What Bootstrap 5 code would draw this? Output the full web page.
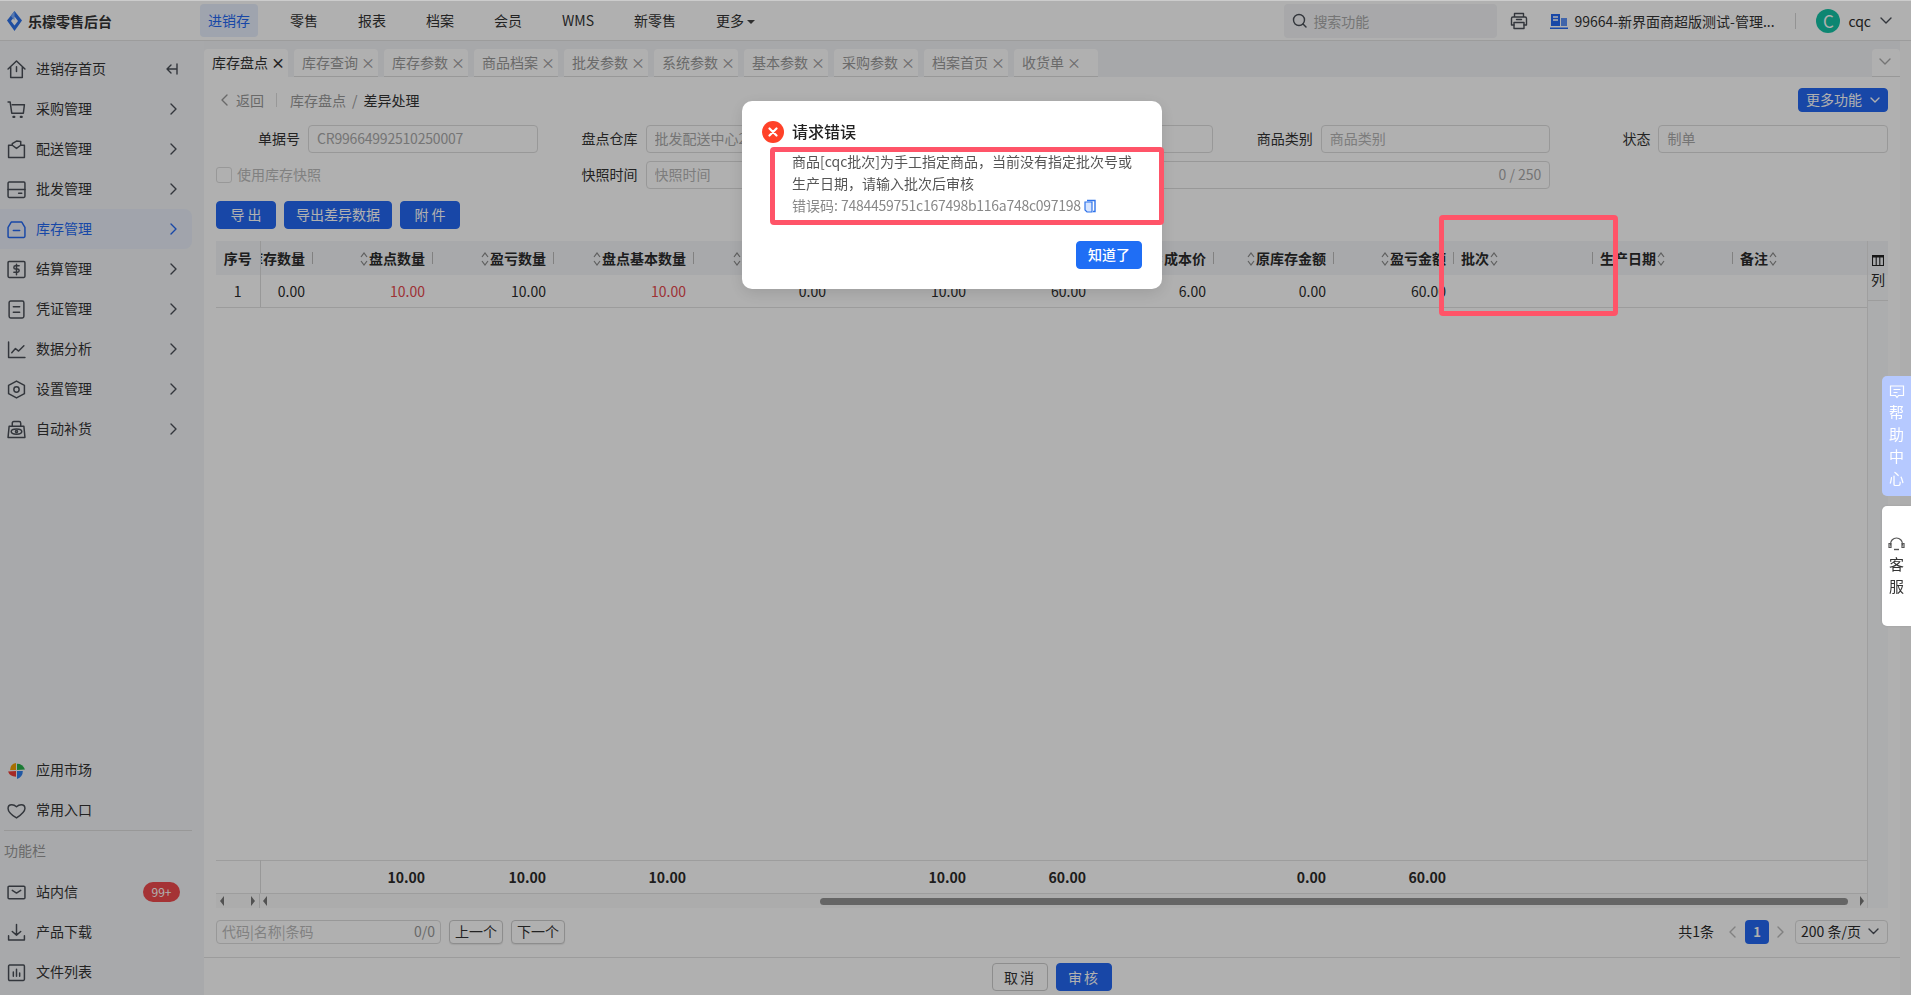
<!DOCTYPE html>
<html lang="zh-CN">
<head>
<meta charset="utf-8">
<title>乐檬零售后台</title>
<link href="https://cdn.jsdelivr.net/npm/bootstrap@5.3.0/dist/css/bootstrap.min.css" rel="stylesheet">
<style>
html,body{height:100%;overflow:hidden}
body{font-family:"Noto Sans CJK SC","Noto Sans",sans-serif;font-size:14px;color:#2b2b2b;background:#fff;line-height:20px}
.ico{fill:none;stroke:#4a4f57;stroke-width:1.4;stroke-linecap:round;stroke-linejoin:round;flex:none}
.shell{height:100vh}
.topbar{height:41px;border-top:1px solid #ccc;border-bottom:1px solid #e2e2e2;flex:none}
.brand{width:200px;padding-left:7px;gap:6px;font-weight:700;color:#333}
.topnav{gap:24px}
.topnav .nav-link{padding:0 8px;height:33px;line-height:33px;color:#333;border-radius:4px;font-size:14px}
.topnav .nav-link.on{background:#e6eefc;color:#2468f2}
.caret{display:inline-block;border:4px solid transparent;border-top-color:#444;border-bottom:0;margin-left:3px;vertical-align:2px}
.searchbox{width:213px;height:34px;background:#f3f4f6;border-radius:4px;padding-left:8px;gap:6px;color:#aaa;margin-right:13px}
.orgname{margin-left:22px;gap:6px;width:245px;white-space:nowrap;color:#333}
.vsep{width:1px;height:16px;background:#d5d5d5}
.avatar{width:24px;height:24px;border-radius:50%;background:#14c3a5;color:#fff;font-size:17px;margin-left:20px;margin-right:8px;padding-top:1px}
.sidebar{width:204px;background:#f3f5f8;padding:8px 0 3px;flex:none}
.sideitem{height:40px;width:192px;padding-left:7px;gap:10px;color:#333;border-radius:0 8px 8px 0;position:relative}
.sideitem>svg:first-child{width:19px;height:19px}
.sideitem>span:not(.badge){margin-top:-2px}
.sideitem .chev{position:absolute;left:170px}
.sideitem .chev.back{left:166px}
.sideitem.on{background:#e9eef9;color:#2468f2}
.sideitem.on .ico{stroke:#2468f2}
.sidehr{height:1px;background:#ddd;margin:0 12px 0 4px;width:188px}
.sidecap{height:41px;line-height:39px;padding-left:4px;color:#999}
.sidebadge{position:absolute;left:143px;width:37px;height:20px;border-radius:10px;background:#f04b4d;color:#fff;font-size:12px;font-weight:400;line-height:20px;padding:0;text-align:center}
.mainwrap{min-width:0}
.tabstrip{height:36px;background:#f2f4f6;padding-top:8px;gap:6px;flex:none}
.pagetab{width:84px;height:28px;background:#fff;border-bottom:1px solid #ddd;border-radius:4px 4px 0 0;padding:0 0 2px 8px;color:#9a9a9a;gap:3px;white-space:nowrap}
.pagetab.on{color:#333;border-bottom-color:#fff}
.pagetab .x{font-size:14px;line-height:20px}
.pagetab.on .x{font-weight:700}
.pagetab.last{width:28px;margin-left:auto;padding-left:7px}
.body-pad{padding:0 12px;min-height:0}
.crumbrow{height:48px;flex:none;padding-bottom:2px}
.crumbs.breadcrumb{margin:0;--bs-breadcrumb-divider-color:#999;--bs-breadcrumb-item-padding-x:6px;font-size:14px}
.crumbs .breadcrumb-item{color:#999}
.crumbs .breadcrumb-item.active{color:#333}
.crumbs .breadcrumb-item+.breadcrumb-item{padding-left:6px}
.backlink{color:#999;gap:8px;margin-left:5px;padding-right:12px;margin-right:13px;border-right:1px solid #ddd;height:14px}
.btn-blue.btn{--bs-btn-bg:#2468f2;--bs-btn-border-color:#2468f2;--bs-btn-color:#fff;--bs-btn-font-size:14px;--bs-btn-padding-y:0;--bs-btn-padding-x:0;--bs-btn-border-radius:4px;--bs-btn-line-height:24px}
.morebtn{width:90px;height:24px;line-height:20px!important;font-size:14px;padding-bottom:2px!important}
.formgrid{display:grid;grid-template-columns:repeat(5,1fr);gap:8px 16px;flex:none}
.fld{display:grid;grid-template-columns:84px 1fr;column-gap:8px;align-items:center;color:#333}
.fld label{text-align:right;margin-top:-2px}
.wide{grid-column:span 2;grid-template-columns:84px 1fr}
.inp.form-control{height:28px;min-height:28px;padding:0 8px 2px;font-size:14px;line-height:24px;border-color:#ddd;border-radius:4px;color:#aaa;background:#fff}
.inp.tight{letter-spacing:-.2px}
.inp::placeholder{color:#b5b5b5}
.chk.form-check-input{width:16px;height:16px;margin:0 5px 0 0;border-color:#ddd;border-radius:3px;background-color:#fff;opacity:1}
.chk-row{color:#bbb}
.chk-row span{margin-top:-2px}
.actionrow{gap:8px;margin-top:12px;flex:none}
.actionrow .btn{height:28px;padding-bottom:2px}
.tblzone{margin-top:12px;min-height:0}
.colbar{width:21px;background:#fafbfc;border-left:1px solid #e6e6e6;text-align:center;flex:none}
.colbar-top{height:34px;background:#f3f5f8}
.colbar-in{margin-top:-20px;border-bottom:1px solid #e4e4e4;height:46px;padding-top:0}
.colbar-in svg{display:block;margin:0 auto 3px}
table.grid{table-layout:fixed;width:1651px;margin:0;border-collapse:collapse;flex:none}
table.grid th,table.grid td{padding:0 15px 0 0;text-align:right;vertical-align:middle;white-space:nowrap;overflow:hidden;position:relative;border:0;color:#2b2b2b;background:transparent;box-shadow:none}
table.grid thead th{height:34px;background:#f3f5f8;font-weight:700}
table.grid tbody td{height:32px;border-bottom:1px solid #e2e2e2}
table.grid tbody td:first-child,table.grid thead th:first-child,table.grid tfoot td:first-child{padding:0;text-align:center;border-right:1px solid #ddd}
table.grid th.lft{text-align:left;padding:0 0 0 0}
table.grid th:not(:first-child)::after{content:"";position:absolute;right:7px;top:11px;height:12px;width:1px;background:#bbb}
table.grid th.end::after{display:none}
table.grid .neg{color:#e5484d}
.clipr{display:flex;justify-content:flex-end;overflow:hidden}
.srt{display:inline-block;vertical-align:-3px;margin:0 1px;fill:none;stroke:#8a8a8a;stroke-width:1.2}
.foot{flex:none}
table.grid.sum td{height:33px;font-weight:700;border-top:1px solid #e4e4e4;border-bottom:1px solid #e4e4e4}
.hscroll{height:14px;position:relative;background:#fafafa;flex:none}
.hs-froz{width:44px;height:14px;border-right:1px solid #ddd;padding:0 4px 0 4px;flex:none}
.tri{width:0;height:0;border:5px solid transparent;border-left:0;border-right:4px solid #777;display:block}
.tri.r{border-right:0;border-left:4px solid #777}
.thumb{position:absolute;left:604px;top:4px;width:1028px;height:7px;border-radius:4px;background:#939393}
.pagerrow{margin-top:12px;height:24px;flex:none}
.findbox{width:225px;height:24px;border:1px solid #ddd;border-radius:4px;color:#bbb;padding:0 5px 2px;background:#fff}
.findbtn.btn{--bs-btn-padding-y:0;--bs-btn-padding-x:0;--bs-btn-font-size:14px;--bs-btn-border-color:#ccc;--bs-btn-color:#333;--bs-btn-border-radius:4px;--bs-btn-bg:#fff;width:54px;height:24px;line-height:20px;padding-bottom:2px;margin-left:8px;box-shadow:0 1px 1px rgba(0,0,0,.08)}
.totaltxt{margin-top:-2px}
.pager-cur{width:24px;height:24px;border-radius:4px;background:#2468f2;color:#fff;text-align:center;line-height:24px;font-weight:700;font-size:13px}
.pagesel{width:93px;height:24px;border:1px solid #ddd;border-radius:4px;padding:0 0 2px 5px;white-space:nowrap;margin-left:11px}
.bottombar{height:38px;border-top:1px solid #e2e2e2;gap:8px;margin-left:-12px;margin-right:-12px;flex:none}
.bottombar .btn{height:28px;width:56px;letter-spacing:2px}
.ghost.btn{--bs-btn-bg:#fff;--bs-btn-border-color:#ccc;--bs-btn-color:#333;--bs-btn-font-size:14px;--bs-btn-padding-y:0;--bs-btn-padding-x:0;--bs-btn-border-radius:4px;--bs-btn-line-height:26px}
.rightgut{width:11px;background:#fbfbfb;flex:none}
.mask{position:fixed;inset:1px 0 0 0;background:rgba(0,0,0,.31);z-index:10}
.errdlg{position:fixed;left:742px;top:101px;width:420px;height:188px;background:#fff;border-radius:10px;z-index:20;box-shadow:0 4px 16px rgba(0,0,0,.12);padding:20px 20px 20px 20px}
.errhead{gap:8px;font-size:16px;font-weight:500;color:#222;height:22px}
.errhead>span:last-child{margin-top:-2px}
.errdot{width:22px;height:22px;border-radius:50%;background:#ff4128;flex:none}
.errtxt{margin:7px 0 0 30px;color:#555;line-height:22px;width:345px}
.tg{letter-spacing:-.5px}
.errcode{color:#888;line-height:22px}
.errcode .num{letter-spacing:-.27px}
.okbtn{position:absolute;right:20px;bottom:20px;width:66px;height:28px;font-weight:500;padding-bottom:2px}
.okbtn.btn{--bs-btn-bg:#1f6ef5;--bs-btn-border-color:#1f6ef5}
.flag{position:fixed;right:0;width:29px;z-index:20;border-radius:5px 0 0 5px;text-align:center;line-height:22px;font-size:15px}
.flag-help{top:376px;height:120px;background:#b6c9ff;color:#fff;padding-top:9px}
.flag-kf{top:506px;height:120px;background:#fff;color:#333;padding-top:31px;box-shadow:0 0 3px rgba(0,0,0,.1)}
.flag svg{display:block;margin:0 auto 2px}
.flag-kf svg{margin-bottom:0}
.hl{position:fixed;border:5px solid #ff5468;border-radius:4px;z-index:30;pointer-events:none}
.hl-a{left:770px;top:147px;width:394px;height:78px}
.hl-b{left:1439px;top:215px;width:179px;height:101px}
</style>
</head>
<body>
<div class="shell d-flex flex-column">
  <header class="topbar d-flex align-items-center">
    <div class="brand d-flex align-items-center">
      <svg width="15" height="20" viewBox="0 0 15 20"><path d="M7.500 0 15 9.500 7.500 20 0 9.500Z" fill="#2f73ea"/><path d="M7.500 5.500 11 10 7.500 14.500 4 10Z" fill="#fff"/><path d="M7.500 0 4 5 7.500 9.500Z" fill="#7fb0ff"/></svg>
      <span>乐檬零售后台</span>
    </div>
    <nav class="nav topnav">
      <a class="nav-link on" href="#">进销存</a><a class="nav-link" href="#">零售</a><a class="nav-link" href="#">报表</a><a class="nav-link" href="#">档案</a><a class="nav-link" href="#">会员</a><a class="nav-link" href="#">WMS</a><a class="nav-link" href="#">新零售</a><a class="nav-link" href="#">更多<i class="caret"></i></a>
    </nav>
    <div class="ms-auto d-flex align-items-center">
      <div class="searchbox d-flex align-items-center">
        <svg class="ico" width="15" height="15" viewBox="0 0 15 15"><circle cx="7" cy="7" r="5.500"/><path d="m11 11 3 3"/></svg>
        <span>搜索功能</span>
      </div>
      <svg class="ico" width="18" height="18" viewBox="0 0 18 18"><path d="M4.500 5V1.500h9V5M4 13H1.500V6.500q0-1.500 1.500-1.500h12q1.500 0 1.500 1.500V13H14"/><path d="M4 10.500h10v6H4zM6.500 7.500h5"/></svg>
      <div class="orgname d-flex align-items-center">
        <svg width="18" height="18" viewBox="0 0 18 18"><path d="M1 2h9v12H1z" fill="#2468f2"/><path d="M11 6h6v8h-6z" fill="#5f93f7"/><path d="M0 15.500h18V17H0z" fill="#2468f2"/><path d="M3 5h5M3 8h5" stroke="#fff" stroke-width="1.300"/></svg>
        <span>99664-新界面商超版测试-管理...</span>
      </div>
      <span class="vsep"></span>
      <div class="avatar d-flex align-items-center justify-content-center">C</div>
      <span>cqc</span>
      <svg class="ico" style="margin:0 19px 0 9px" width="12" height="8" viewBox="0 0 12 8"><path d="m1 1 5 5 5-5"/></svg>
    </div>
  </header>
  <div class="d-flex flex-grow-1" style="min-height:0">
    <aside class="sidebar d-flex flex-column justify-content-between">
      <div>
        <div class="sideitem d-flex align-items-center"><svg class="ico" width="18" height="18" viewBox="0 0 18 18"><path d="M1 8.500 9 1l8 7.500M3.500 7v9.500h11V7M9 6.500V11"/></svg><span>进销存首页</span><svg class="ico chev back" width="12" height="12" viewBox="0 0 12 12"><path d="M1 6h9M5 2 1 6l4 4M11 1v10"/></svg></div>
        <div class="sideitem d-flex align-items-center"><svg class="ico" width="18" height="18" viewBox="0 0 18 18"><path d="M1 2h2l1.500 10.500h11l1-8H5"/><path d="M6 16h1M13 16h1" stroke-width="2"/></svg><span>采购管理</span><svg class="ico chev" width="8" height="12" viewBox="0 0 8 12"><path d="m1 1 5 5-5 5"/></svg></div>
        <div class="sideitem d-flex align-items-center"><svg class="ico" width="18" height="18" viewBox="0 0 18 18"><path d="M5 5H1.500v11.500h15V5H13M5 5l4 3 4-3V1.500L9 1 5 3.500Z"/></svg><span>配送管理</span><svg class="ico chev" width="8" height="12" viewBox="0 0 8 12"><path d="m1 1 5 5-5 5"/></svg></div>
        <div class="sideitem d-flex align-items-center"><svg class="ico" width="18" height="18" viewBox="0 0 18 18"><rect x="1" y="2" width="16" height="14.500" rx="1"/><path d="M1 9h16M11 12.500h3"/></svg><span>批发管理</span><svg class="ico chev" width="8" height="12" viewBox="0 0 8 12"><path d="m1 1 5 5-5 5"/></svg></div>
        <div class="sideitem on d-flex align-items-center"><svg class="ico" width="18" height="18" viewBox="0 0 18 18"><path d="M4 2h10l3 5v8.500q0 1-1 1H2q-1 0-1-1V7ZM6 10h6"/></svg><span>库存管理</span><svg class="ico chev" width="8" height="12" viewBox="0 0 8 12"><path d="m1 1 5 5-5 5"/></svg></div>
        <div class="sideitem d-flex align-items-center"><svg class="ico" width="18" height="18" viewBox="0 0 18 18"><rect x="1" y="1.500" width="16" height="15" rx="1"/><path d="M11.500 5.500h-3.500q-1.500 0-1.500 1.500t1.500 1.500h2q1.500 0 1.500 1.500t-1.500 1.500H6.500M9 4v10"/></svg><span>结算管理</span><svg class="ico chev" width="8" height="12" viewBox="0 0 8 12"><path d="m1 1 5 5-5 5"/></svg></div>
        <div class="sideitem d-flex align-items-center"><svg class="ico" width="18" height="18" viewBox="0 0 18 18"><rect x="2" y="1" width="14" height="16" rx="1.500"/><path d="M6 6.500h6M6 11.500h6"/></svg><span>凭证管理</span><svg class="ico chev" width="8" height="12" viewBox="0 0 8 12"><path d="m1 1 5 5-5 5"/></svg></div>
        <div class="sideitem d-flex align-items-center"><svg class="ico" width="18" height="18" viewBox="0 0 18 18"><path d="M1.500 2v14.500H17M4.500 12l3.500-4 3 2.500 5-5"/></svg><span>数据分析</span><svg class="ico chev" width="8" height="12" viewBox="0 0 8 12"><path d="m1 1 5 5-5 5"/></svg></div>
        <div class="sideitem d-flex align-items-center"><svg class="ico" width="18" height="18" viewBox="0 0 18 18"><path d="M9 1l7.500 4v8L9 17l-7.500-4V5Z"/><circle cx="9" cy="9" r="2.500"/></svg><span>设置管理</span><svg class="ico chev" width="8" height="12" viewBox="0 0 8 12"><path d="m1 1 5 5-5 5"/></svg></div>
        <div class="sideitem d-flex align-items-center"><svg class="ico" width="18" height="18" viewBox="0 0 18 18"><path d="M5 6V3q0-1.500 1.500-1.500h5Q13 1.500 13 3v3M2 6h14l1 10.500H1Z"/><ellipse cx="9" cy="11" rx="5" ry="2.500"/><circle cx="9" cy="11" r="1"/></svg><span>自动补货</span><svg class="ico chev" width="8" height="12" viewBox="0 0 8 12"><path d="m1 1 5 5-5 5"/></svg></div>
      </div>
      <div>
        <div class="sideitem d-flex align-items-center"><svg width="18" height="18" viewBox="0 0 18 18"><path d="M8.500 8.500H3Q3 3 8.500 2Z" fill="#f2a100"/><path d="M9.500 8.500V2.500Q15 2.500 17 8Z" fill="#27b14a"/><path d="M8.500 9.500V15Q2.500 14.500 1 10Z" fill="#ef3e36"/><path d="M9.500 9.500H15Q15 15 9.500 17Z" fill="#2f80ed"/></svg><span>应用市场</span></div>
        <div class="sideitem d-flex align-items-center"><svg class="ico" width="18" height="18" viewBox="0 0 18 18"><path d="M9 16C4 13 1 10.500 1 7q0-3.500 3.500-3.500Q7 3.500 9 5.500 11 3.500 13.500 3.500 17 3.500 17 7q0 3.500-8 9Z"/></svg><span>常用入口</span></div>
        <div class="sidehr"></div>
        <div class="sidecap">功能栏</div>
        <div class="sideitem d-flex align-items-center"><svg class="ico" width="18" height="18" viewBox="0 0 18 18"><rect x="1" y="3" width="16" height="12" rx="1"/><path d="m5 7 4 2.500L13 7"/></svg><span>站内信</span><span class="badge sidebadge">99+</span></div>
        <div class="sideitem d-flex align-items-center"><svg class="ico" width="18" height="18" viewBox="0 0 18 18"><path d="M9 1.500v10M5 8l4 3.500L13 8M1.500 12v4h15v-4"/></svg><span>产品下载</span></div>
        <div class="sideitem d-flex align-items-center"><svg class="ico" width="18" height="18" viewBox="0 0 18 18"><rect x="1.500" y="2" width="15" height="14.500" rx="1"/><path d="M6 8.500v4M9 6v6.500M12 9.500v3"/></svg><span>文件列表</span></div>
      </div>
    </aside>
    <main class="mainwrap flex-grow-1 d-flex flex-column">
      <div class="tabstrip d-flex">
        <div class="pagetab on d-flex align-items-center"><span>库存盘点</span><span class="x">×</span></div>
        <div class="pagetab d-flex align-items-center"><span>库存查询</span><span class="x">×</span></div>
        <div class="pagetab d-flex align-items-center"><span>库存参数</span><span class="x">×</span></div>
        <div class="pagetab d-flex align-items-center"><span>商品档案</span><span class="x">×</span></div>
        <div class="pagetab d-flex align-items-center"><span>批发参数</span><span class="x">×</span></div>
        <div class="pagetab d-flex align-items-center"><span>系统参数</span><span class="x">×</span></div>
        <div class="pagetab d-flex align-items-center"><span>基本参数</span><span class="x">×</span></div>
        <div class="pagetab d-flex align-items-center"><span>采购参数</span><span class="x">×</span></div>
        <div class="pagetab d-flex align-items-center"><span>档案首页</span><span class="x">×</span></div>
        <div class="pagetab d-flex align-items-center"><span>收货单</span><span class="x">×</span></div>
        <div class="pagetab last d-flex align-items-center"><svg class="ico" style="stroke:#aaa" width="12" height="8" viewBox="0 0 12 8"><path d="m1 1 5 5 5-5"/></svg></div>
      </div>
      <div class="body-pad flex-grow-1 d-flex flex-column">
        <div class="crumbrow d-flex align-items-center justify-content-between">
          <div class="d-flex align-items-center">
            <div class="backlink d-flex align-items-center"><svg class="ico" style="stroke:#999" width="7" height="12" viewBox="0 0 7 12"><path d="M6 1 1 6l5 5"/></svg><span>返回</span></div>
            <ol class="breadcrumb crumbs"><li class="breadcrumb-item">库存盘点</li><li class="breadcrumb-item active">差异处理</li></ol>
          </div>
          <button class="btn btn-blue morebtn" type="button">更多功能 <svg class="ico" style="stroke:#fff;margin-left:5px;vertical-align:1px" width="10" height="7" viewBox="0 0 10 7"><path d="m1 1 4 4 4-4"/></svg></button>
        </div>
        <div class="formgrid">
          <div class="fld"><label>单据号</label><input class="form-control inp tight" value="CR99664992510250007" disabled></div>
          <div class="fld"><label>盘点仓库</label><input class="form-control inp" value="批发配送中心2" disabled></div>
          <div class="fld"><label>盘点品项</label><input class="form-control inp" disabled></div>
          <div class="fld"><label>商品类别</label><input class="form-control inp" placeholder="商品类别" disabled></div>
          <div class="fld"><label>状态</label><input class="form-control inp" value="制单" disabled></div>
          <div class="d-flex align-items-center chk-row"><input class="form-check-input chk" type="checkbox" disabled><span>使用库存快照</span></div>
          <div class="fld"><label>快照时间</label><input class="form-control inp" placeholder="快照时间" disabled></div>
          <div class="fld wide"><label>备注</label><div class="form-control inp text-end">0 / 250</div></div>
        </div>
        <div class="actionrow d-flex">
          <button class="btn btn-blue" style="width:60px" type="button">导 出</button>
          <button class="btn btn-blue" style="width:108px" type="button">导出差异数据</button>
          <button class="btn btn-blue" style="width:60px" type="button">附 件</button>
        </div>
        <div class="tblzone flex-grow-1 d-flex">
          <div class="flex-grow-1 d-flex flex-column" style="min-width:0">
            <table class="table grid">
              <colgroup><col style="width:44px"><col style="width:60px"><col style="width:120px"><col style="width:121px"><col style="width:140px"><col style="width:140px"><col style="width:140px"><col style="width:120px"><col style="width:120px"><col style="width:120px"><col style="width:120px"><col style="width:139px"><col style="width:140px"><col style="width:127px"></colgroup>
              <thead><tr>
                <th>序号</th>
                <th><div class="clipr"><span class="text-nowrap flex-shrink-0">库存数量</span></div></th>
                <th><svg class="srt" width="8" height="16" viewBox="0 0 8 16"><path d="m1 6 3-4 3 4M1 10l3 4 3-4"/></svg>盘点数量</th>
                <th><svg class="srt" width="8" height="16" viewBox="0 0 8 16"><path d="m1 6 3-4 3 4M1 10l3 4 3-4"/></svg>盈亏数量</th>
                <th><svg class="srt" width="8" height="16" viewBox="0 0 8 16"><path d="m1 6 3-4 3 4M1 10l3 4 3-4"/></svg>盘点基本数量</th>
                <th><svg class="srt" width="8" height="16" viewBox="0 0 8 16"><path d="m1 6 3-4 3 4M1 10l3 4 3-4"/></svg>库存基本数量</th>
                <th><svg class="srt" width="8" height="16" viewBox="0 0 8 16"><path d="m1 6 3-4 3 4M1 10l3 4 3-4"/></svg>盈亏基本数量</th>
                <th><svg class="srt" width="8" height="16" viewBox="0 0 8 16"><path d="m1 6 3-4 3 4M1 10l3 4 3-4"/></svg>盘点金额</th>
                <th><svg class="srt" width="8" height="16" viewBox="0 0 8 16"><path d="m1 6 3-4 3 4M1 10l3 4 3-4"/></svg>成本价</th>
                <th><svg class="srt" width="8" height="16" viewBox="0 0 8 16"><path d="m1 6 3-4 3 4M1 10l3 4 3-4"/></svg>原库存金额</th>
                <th><svg class="srt" width="8" height="16" viewBox="0 0 8 16"><path d="m1 6 3-4 3 4M1 10l3 4 3-4"/></svg>盈亏金额</th>
                <th class="lft">批次<svg class="srt" width="8" height="16" viewBox="0 0 8 16"><path d="m1 6 3-4 3 4M1 10l3 4 3-4"/></svg></th>
                <th class="lft">生产日期<svg class="srt" width="8" height="16" viewBox="0 0 8 16"><path d="m1 6 3-4 3 4M1 10l3 4 3-4"/></svg></th>
                <th class="lft end">备注<svg class="srt" width="8" height="16" viewBox="0 0 8 16"><path d="m1 6 3-4 3 4M1 10l3 4 3-4"/></svg></th>
              </tr></thead>
              <tbody><tr>
                <td>1</td><td>0.00</td><td class="neg">10.00</td><td>10.00</td><td class="neg">10.00</td><td>0.00</td><td>10.00</td><td>60.00</td><td>6.00</td><td>0.00</td><td>60.00</td><td></td><td></td><td></td>
              </tr></tbody>
            </table>
            <div class="flex-grow-1"></div>
            <div class="foot">
              <table class="table grid sum">
                <colgroup><col style="width:44px"><col style="width:60px"><col style="width:120px"><col style="width:121px"><col style="width:140px"><col style="width:140px"><col style="width:140px"><col style="width:120px"><col style="width:120px"><col style="width:120px"><col style="width:120px"><col style="width:139px"><col style="width:140px"><col style="width:127px"></colgroup>
                <tbody><tr><td></td><td></td><td>10.00</td><td>10.00</td><td>10.00</td><td></td><td>10.00</td><td>60.00</td><td></td><td>0.00</td><td>60.00</td><td></td><td></td><td></td></tr></tbody>
              </table>
              <div class="hscroll d-flex align-items-center">
                <div class="hs-froz d-flex align-items-center justify-content-between"><i class="tri"></i><i class="tri r"></i></div>
                <i class="tri" style="margin-left:3px"></i>
                <div class="thumb"></div>
                <i class="tri r ms-auto" style="margin-right:3px"></i>
              </div>
            </div>
          </div>
          <div class="colbar">
            <div class="colbar-top"></div>
            <div class="colbar-in"><svg width="12" height="11" viewBox="0 0 12 11"><path d="M.5.500h11v10H.5zM4.200.500v10M7.800.500v10" fill="none" stroke="#222" stroke-width="1.100"/><path d="M.5.500h11v2H.5z" fill="#222"/></svg>列</div>
          </div>
        </div>
        <div class="pagerrow d-flex align-items-center">
          <div class="findbox d-flex align-items-center justify-content-between"><span>代码|名称|条码</span><span style="color:#999">0/0</span></div>
          <button class="btn findbtn" type="button">上一个</button>
          <button class="btn findbtn" type="button">下一个</button>
          <div class="ms-auto d-flex align-items-center">
            <span class="totaltxt">共1条</span>
            <svg class="ico" style="stroke:#bbb;margin:0 9px 0 15px" width="7" height="12" viewBox="0 0 7 12"><path d="M6 1 1 6l5 5"/></svg>
            <span class="pager-cur">1</span>
            <svg class="ico" style="stroke:#bbb;margin-left:8px" width="7" height="12" viewBox="0 0 7 12"><path d="m1 1 5 5-5 5"/></svg>
            <div class="pagesel d-flex align-items-center"><span>200 条/页</span><svg class="ico" style="margin-left:7px" width="11" height="7" viewBox="0 0 11 7"><path d="m1 1 4.500 4.500L10 1"/></svg></div>
          </div>
        </div>
        <div class="bottombar d-flex align-items-center justify-content-center mt-auto" style="margin-top:13px!important">
          <button class="btn ghost" type="button">取消</button>
          <button class="btn btn-blue" type="button">审核</button>
        </div>
      </div>
    </main>
    <div class="rightgut"></div>
  </div>
</div>
<div class="mask"></div>
<div class="errdlg" role="dialog">
  <div class="errhead d-flex align-items-center">
    <span class="errdot d-flex align-items-center justify-content-center"><svg width="10" height="10" viewBox="0 0 10 10"><path d="m1.500 1.500 7 7M8.500 1.500l-7 7" stroke="#fff" stroke-width="2.200" stroke-linecap="round"/></svg></span>
    <span>请求错误</span>
  </div>
  <div class="errtxt">
    <div>商品[cqc批次]为手工指定商品，当前没有指定批次号或生产日期，请输入批次后审核</div>
    <div class="errcode">错误码: <span class="num">7484459751c167498b116a748c097198</span> <svg width="12" height="14" viewBox="0 0 12 14" style="vertical-align:-2px"><path d="M3 1.500h8v11H9" fill="none" stroke="#2f73ea" stroke-width="1.400"/><path d="M1 3h7v10H3L1 11Z" fill="#d7e5ff" stroke="#2f73ea" stroke-width="1.200"/></svg></div>
  </div>
  <button class="btn btn-blue okbtn" type="button">知道了</button>
</div>
<div class="flag flag-help">
  <svg width="16" height="14" viewBox="0 0 16 14"><path d="M1.500 1h13v9.500H9.500L8 12.500l-1.500-2h-5Z M4.500 4.500h7M4.500 7.500h4" fill="none" stroke="#fff" stroke-width="1.200"/></svg>
  帮<br>助<br>中<br>心
</div>
<div class="flag flag-kf">
  <svg width="17" height="16" viewBox="0 0 17 16"><path d="M2.500 8.500V7a6 6 0 0 1 12 0v1.500" fill="none" stroke="#555" stroke-width="1.200"/><path d="M1 6.500h2v4H1zM14 6.500h2v4h-2z" fill="none" stroke="#555" stroke-width="1.200"/><path d="M6 12.500h5" stroke="#555" stroke-width="1.400"/></svg>
  客<br>服
</div>
<div class="hl hl-a"></div>
<div class="hl hl-b"></div>
<script src="https://cdn.jsdelivr.net/npm/bootstrap@5.3.0/dist/js/bootstrap.bundle.min.js"></script>
</body>
</html>
